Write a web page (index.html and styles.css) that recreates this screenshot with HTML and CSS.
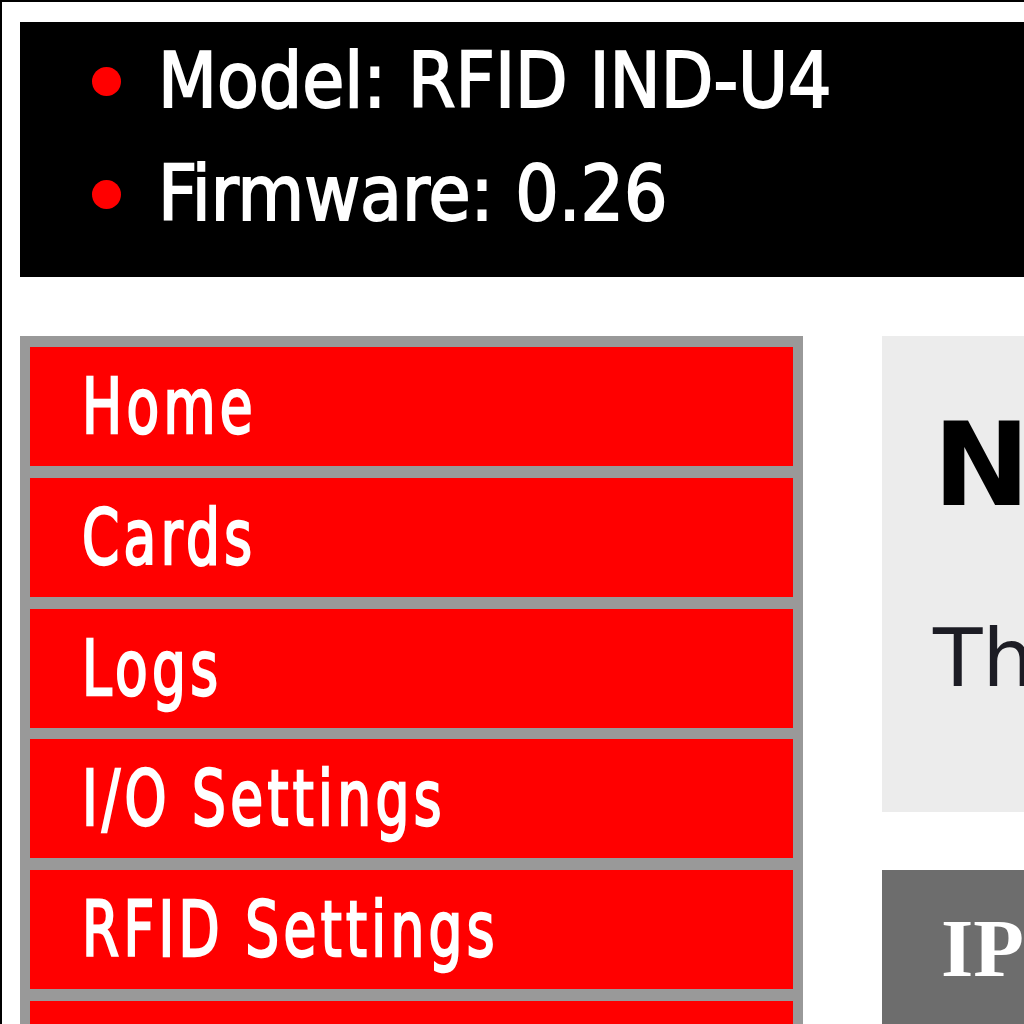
FILE: index.html
```html
<!DOCTYPE html>
<html>
<head>
<meta charset="utf-8">
<link rel="stylesheet" href="styles.css">
</head>
<body>
<div class="frame">
  <header class="info">
    <ul class="info-list">
      <li class="info-item"><span class="dot"></span><span>Model: RFID IND-U4</span></li>
      <li class="info-item"><span class="dot"></span><span>Firmware: 0.26</span></li>
    </ul>
  </header>
  <div class="main">
    <nav class="menu">
      <a class="menu-item"><span class="menu-label">Home</span></a>
      <a class="menu-item"><span class="menu-label">Cards</span></a>
      <a class="menu-item"><span class="menu-label">Logs</span></a>
      <a class="menu-item"><span class="menu-label">I/O Settings</span></a>
      <a class="menu-item"><span class="menu-label">RFID Settings</span></a>
      <a class="menu-item"><span class="menu-label">Network Settings</span></a>
    </nav>
    <section class="content">
      <div class="intro">
        <h1 class="title">Network Settings</h1>
        <p class="desc">This page allows you to configure the network settings.</p>
      </div>
      <table class="table">
        <tr><th class="th">IP Address</th></tr>
      </table>
    </section>
  </div>
</div>
</body>
</html>
```

FILE: styles.css
```css
html, body {
  margin: 0;
  padding: 0;
  overflow: hidden;
  background: #fff;
}
.frame {
  width: 1500px;
  min-height: 1200px;
  border: 2px solid #000;
  padding: 20px 18px;
  box-sizing: border-box;
}
.info {
  background: #000;
  height: 255px;
  box-sizing: border-box;
  padding-top: 2px;
}
.info-list {
  list-style: none;
  margin: 0;
  padding: 0 0 0 72px;
}
.info-item {
  display: flex;
  align-items: baseline;
  font-family: "DejaVu Sans Condensed", "DejaVu Sans", sans-serif;
  font-size: 76px;
  line-height: 113px;
  color: #fff;
  -webkit-text-stroke: 1.8px #fff;
}
.dot {
  width: 29px;
  height: 29px;
  border-radius: 50%;
  background: #ff0000;
  margin-right: 37px;
  flex: none;
  position: relative;
  top: -11px;
}
.main {
  display: flex;
  margin-top: 59px;
  gap: 79px;
  align-items: flex-start;
}
.menu {
  width: 783px;
  flex: none;
  background: #999;
  padding: 11px 10px;
  box-sizing: border-box;
  display: flex;
  flex-direction: column;
  gap: 11.8px;
}
.menu-item {
  display: block;
  height: 119px;
  background: #ff0000;
  color: #fff;
  font-family: "DejaVu Sans Condensed", "DejaVu Sans", sans-serif;
  font-size: 76px;
  line-height: 119px;
  padding-left: 52px;
  box-sizing: border-box;
  white-space: nowrap;
  overflow: hidden;
}
.menu-label {
  display: inline-block;
  letter-spacing: 5.6px;
  transform: scaleX(0.78);
  transform-origin: left center;
  -webkit-text-stroke: 2.4px #fff;
}
.content {
  width: 700px;
  flex: none;
}
.intro {
  background: #ececec;
  height: 476px;
  box-sizing: border-box;
  padding: 71px 0 0 51px;
  overflow: hidden;
}
.title {
  margin: 0;
  font-family: "DejaVu Sans", sans-serif;
  font-weight: bold;
  font-size: 116px;
  line-height: 116px;
  color: #000;
  white-space: nowrap;
}
.desc {
  margin: 95px 0 0 0;
  font-family: "DejaVu Sans", sans-serif;
  font-size: 81px;
  line-height: 81px;
  color: #1c1c24;
  white-space: nowrap;
}
.table {
  margin-top: 58px;
  border-collapse: collapse;
  width: 100%;
}
.th {
  background: #6d6d6d;
  color: #fff;
  font-family: "Liberation Serif", serif;
  font-weight: bold;
  font-size: 83px;
  line-height: 83px;
  text-align: left;
  padding: 37px 0 37px 59px;
  white-space: nowrap;
}
```
